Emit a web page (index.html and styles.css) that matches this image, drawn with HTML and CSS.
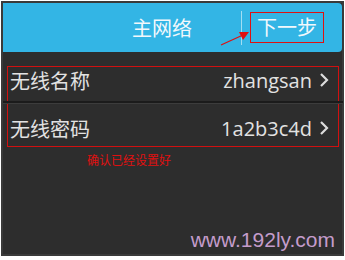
FILE: index.html
```html
<!DOCTYPE html>
<html lang="zh-CN">
<head>
  <meta charset="UTF-8">
  <title>主网络</title>
  <link rel="stylesheet" href="styles.css">
</head>
<body>
  <div class="screen">
    <header class="topbar">
      <span class="title">主网络</span>
      <span class="divider"></span>
      <span class="next">下一步</span>
      <svg class="arrow" width="40" height="20" viewBox="0 0 40 20">
        <line x1="2" y1="17" x2="24" y2="7" stroke="#e01010" stroke-width="1.2"/>
        <polygon points="30,4 20,4 24,12" fill="#e01010"/>
      </svg>
    </header>

    <div class="settings">
      <div class="row first">
        <span class="label">无线名称</span>
        <span class="value">zhangsan</span>
        <svg class="chev" width="10" height="16" viewBox="0 0 10 16">
          <polyline points="2,2 8,8 2,14" fill="none" stroke="#dcdcdc" stroke-width="2.2"/>
        </svg>
      </div>
      <div class="sep"></div>
      <div class="row second">
        <span class="label">无线密码</span>
        <span class="value">1a2b3c4d</span>
        <svg class="chev" width="10" height="16" viewBox="0 0 10 16">
          <polyline points="2,2 8,8 2,14" fill="none" stroke="#dcdcdc" stroke-width="2.2"/>
        </svg>
      </div>
    </div>

    <p class="note">确认已经设置好</p>

    <div class="watermark">www.192ly.com</div>
  </div>
</body>
</html>
```

FILE: styles.css
```css
body {
  margin: 0;
  background-color: #ffffff;
  font-family: "Open Sans", "Noto Sans CJK SC", sans-serif;
}

.screen {
  box-sizing: border-box;
  margin: 1px 1px 0 1px;
  height: 255px;
  border: 2px solid #3a3a3a;
  background-color: #2d2d2d;
  display: flex;
  flex-direction: column;
}

.topbar {
  position: relative;
  height: 49px;
  background-color: #33b5e5;
  border-radius: 0 4px 4px 0;
  display: flex;
  align-items: center;
  justify-content: flex-end;
  padding-right: 18px;
  color: #f2f8fc;
  font-size: 20px;
}

.title {
  margin-right: 49px;
}

.divider {
  width: 1px;
  height: 34px;
  background-color: rgba(255, 255, 255, 0.55);
  margin-right: 8px;
}

.next {
  box-sizing: border-box;
  height: 31px;
  line-height: 29px;
  padding: 0 6px;
  border: 1px solid #e01010;
}

.arrow {
  position: absolute;
  left: 216px;
  top: 25px;
}

.settings {
  margin: 14px 3px 0 4px;
  border: 1px solid #d01010;
  color: #e2e2e2;
  font-size: 20px;
}

.row {
  display: flex;
  align-items: center;
  box-sizing: border-box;
  padding: 0 9px 0 2px;
}

.row.first {
  height: 34px;
  padding-bottom: 8px;
}

.row.second {
  height: 42px;
  padding-top: 6px;
}

.label {
  flex: 1;
}

.value {
  margin-right: 7px;
}

.sep {
  margin: 0 -5px;
  height: 0;
  border-top: 2px solid #1b1b1b;
  border-bottom: 1px solid #3c3c3c;
}

.note {
  margin: 6px 0 0 84px;
  font-size: 12px;
  line-height: 16px;
  color: #e01010;
}

.watermark {
  margin-top: auto;
  text-align: right;
  padding: 0 7px 2px 0;
  font-family: "Liberation Sans", Arial, sans-serif;
  font-size: 21px;
  color: #c49ccb;
}
```
